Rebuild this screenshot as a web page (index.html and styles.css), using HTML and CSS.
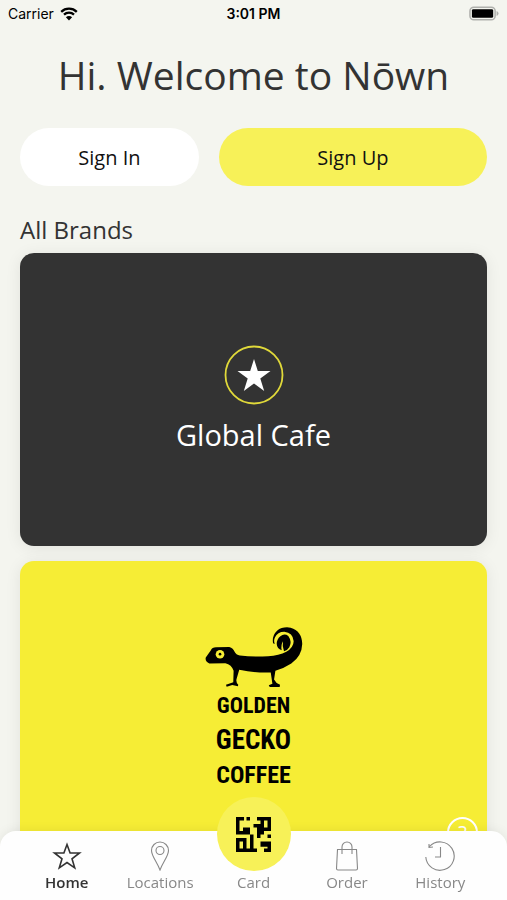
FILE: index.html
```
<!DOCTYPE html>
<html lang="en">
<head>
    <meta charset="UTF-8">
    <meta name="viewport" content="width=device-width, initial-scale=1.0">
    <title>Nōwn</title>
    <link rel="stylesheet" href="styles.css">
</head>
<body>
    <div class="status-bar">
        <div class="carrier">
            <span>Carrier</span>
            <svg class="wifi" viewBox="0 0 18 14" aria-hidden="true">
                <path d="M1.2 4.8a11.2 11.2 0 0 1 15.6 0M4 7.7a7.2 7.2 0 0 1 10 0" fill="none" stroke="#000" stroke-width="2.3"/>
                <path d="M5.9 10.3a4.4 4.4 0 0 1 6.2 0L9 13.5z"/>
            </svg>
        </div>
        <div class="time">3:01 PM</div>
        <div class="power">
            <svg class="battery" viewBox="0 0 31 15" aria-hidden="true">
                <rect x="1" y="1" width="26" height="13" rx="4" fill="none" stroke="#b0b1ad" stroke-width="1.6"/>
                <rect x="3" y="3" width="22" height="9" rx="1.5"/>
                <path d="M28.5 5q2 .8 2 2.5t-2 2.5z" fill="#b0b1ad"/>
            </svg>
        </div>
    </div>

    <main class="content">
        <h1>Hi. Welcome to Nōwn</h1>
        <div class="actions">
            <button class="btn sign-in" type="button">Sign In</button>
            <button class="btn sign-up" type="button">Sign Up</button>
        </div>

        <h2>All Brands</h2>
        <div class="brands">
            <a class="brand global-cafe" href="#">
                <svg class="badge" viewBox="0 0 60 60" aria-hidden="true">
                    <circle cx="30" cy="30" r="28.5" fill="none" stroke="#e0d93a" stroke-width="1.8"/>
                    <path d="M30 14l3.8 12h12.700L36.300 33.600l3.900 12.400L30 38.400 19.800 46l3.900-12.400L13.500 26h12.700z" fill="#fff"/>
                </svg>
                <span class="brand-name">Global Cafe</span>
            </a>
            <a class="brand golden-gecko" href="#">
                <svg class="gecko" viewBox="45 50 295 184" aria-hidden="true">
                    <path d="M47 142L62 121Q66 111 78 111L118 110Q130 113 134 125Q138 134 150 136Q190 141 235 138Q268 137 290 125Q313 110 312 92Q310 67 284 64Q263 64 256 81Q251 90 255 101L250 99Q246 76 262 61Q279 48 303 52Q337 62 338 101Q337 137 305 160Q282 175 257 182L253 208Q258 219 271 224L270 231L240 231L237 226L248 221L243 187Q195 189 148 179L141 203Q136 215 145 224L144 229L127 225L110 230L108 224L130 217L131 182Q125 163 106 159L58 160Q44 154 47 142Z"/>
                    <path d="M272 78Q284 68 296 77Q308 94 299 111Q293 121 283 123Q277 108 280 93Q273 104 276 120Q262 115 261 101Q261 87 272 78Z"/>
                    <circle cx="90" cy="132" r="13" fill="#f6ed35"/>
                    <circle cx="90" cy="132" r="4"/>
                </svg>
                <span class="gecko-name">
                    <span class="small">GOLDEN</span>
                    <span class="large">GECKO</span>
                    <span>COFFEE</span>
                </span>
            </a>
            <button class="help" type="button" aria-label="Help">?</button>
        </div>
    </main>

    <nav class="tab-bar">
        <a class="tab active" href="#">
            <svg class="icon" viewBox="0 0 30 30" aria-hidden="true">
                <path d="M15 3.500l3.100 8.500h9.400l-7.500 5.800 2.700 9L15 21.500l-7.700 5.300 2.700-9L2.500 12h9.400z" stroke-width="1.6"/>
            </svg>
            <span>Home</span>
        </a>
        <a class="tab" href="#">
            <svg class="icon" viewBox="0 0 30 30" aria-hidden="true">
                <path d="M15 29C12 21 6.500 15 6.500 9.500a8.500 8.500 0 0 1 17 0C23.500 15 18 21 15 29z"/>
                <circle cx="15" cy="9.500" r="4"/>
            </svg>
            <span>Locations</span>
        </a>
        <a class="tab" href="#">
            <span class="card-circle">
                <svg class="code" viewBox="0 0 10 10" aria-hidden="true">
                    <path d="M0 0h2.300v1H1v3h1V3h2v2H0zM3 0h1v1H3zM6 0h4v4H8v1H7V4H6V3H5V2h2V1H6zM8 1v2h1V1zM9 5h1v1H9zM6 4h1v1H6zM4 5h1v4h1v1H0V6h3v3h1zM1 7v2h1V7zM6 5h1v1H6zM7 7h3v3H8V9h1V8.500H7z" fill-rule="evenodd"/>
                </svg>
            </span>
            <span>Card</span>
        </a>
        <a class="tab" href="#">
            <svg class="icon" viewBox="0 0 30 30" aria-hidden="true">
                <path d="M5.500 8.500h19l1 19q0 1.500-1.500 1.500H6q-1.500 0-1.500-1.500zM10 13V6a5 5 0 0 1 10 0v7"/>
            </svg>
            <span>Order</span>
        </a>
        <a class="tab" href="#">
            <svg class="icon" viewBox="0 0 30 30" aria-hidden="true">
                <path d="M.8 16A14.200 14.200 0 1 0 4.500 5.500M4 3v3.500l4-.5M15.500 6v10H10"/>
            </svg>
            <span>History</span>
        </a>
    </nav>
</body>
</html>
```
FILE: styles.css
```
* {
    box-sizing: border-box;
}
body {
    margin: 0;
    min-height: 100vh;
    background-color: #f4f5ef;
    color: #333;
    font-family: "Open Sans", "Noto Sans", sans-serif;
}
a {
    color: inherit;
    text-decoration: none;
}
button {
    font-family: inherit;
    cursor: pointer;
}

.status-bar {
    display: flex;
    align-items: center;
    height: 27px;
    padding: 0 8px;
    color: #000;
    font-family: Inter, "Liberation Sans", sans-serif;
    font-size: 14px;
}
.carrier,
.power {
    flex: 1;
    display: flex;
    align-items: center;
    gap: 6px;
}
.power {
    justify-content: flex-end;
}
.time {
    font-weight: 600;
}
.wifi {
    width: 18px;
    height: 14px;
}
.battery {
    width: 30px;
    height: 15px;
}

.content {
    padding: 20px 20px 46px;
}
h1 {
    margin: 0 0 25px;
    font-size: 39px;
    font-weight: 400;
    line-height: 56px;
    text-align: center;
    white-space: nowrap;
}
.actions {
    display: flex;
    gap: 20px;
    margin-bottom: 26px;
}
.btn {
    height: 58px;
    padding: 0;
    border: none;
    border-radius: 29px;
    color: #111;
    font-size: 20px;
}
.sign-in {
    flex: 2;
    background-color: #fff;
}
.sign-up {
    flex: 3;
    background-color: #f7f158;
}
h2 {
    margin: 0 0 5px;
    font-size: 24px;
    font-weight: 400;
    line-height: 36px;
}

.brands {
    position: relative;
    display: flex;
    flex-direction: column;
    gap: 15px;
}
.brand {
    display: flex;
    flex-direction: column;
    align-items: center;
    justify-content: center;
    height: 293px;
    border-radius: 14px;
    box-shadow: 0 2px 16px rgba(0, 0, 0, 0.08);
}
.global-cafe {
    gap: 10px;
    background-color: #333;
    color: #fff;
}
.badge {
    width: 60px;
    height: 60px;
}
.brand-name {
    font-size: 29px;
    line-height: 40px;
}
.golden-gecko {
    padding-top: 4px;
    background-color: #f6ed35;
    color: #000;
}
.gecko {
    width: 98px;
    height: 61px;
}
.gecko-name {
    display: flex;
    flex-direction: column;
    align-items: center;
    font-family: "Roboto Condensed", "Liberation Sans Narrow", Roboto, sans-serif;
    font-size: 24px;
    font-weight: 700;
    line-height: 35px;
}
.gecko-name .small {
    font-size: 22px;
}
.gecko-name .large {
    font-size: 27px;
}
.help {
    position: absolute;
    right: 9px;
    bottom: 6px;
    width: 31px;
    height: 31px;
    padding: 0;
    border: 2px solid #fff;
    border-radius: 50%;
    background: none;
    color: #fff;
    font-size: 20px;
    line-height: 26px;
}

.tab-bar {
    position: fixed;
    right: 0;
    bottom: 0;
    left: 0;
    display: flex;
    height: 69px;
    padding: 10px 20px 0;
    border-radius: 16px 16px 0 0;
    background-color: #fefefe;
    box-shadow: 0 0 12px rgba(0, 0, 0, 0.08);
}
.tab {
    flex: 1;
    display: flex;
    flex-direction: column;
    align-items: center;
    color: #888;
    font-size: 15px;
    line-height: 22px;
}
.tab.active {
    color: #333;
    font-weight: 600;
}
.icon {
    width: 30px;
    height: 30px;
    fill: none;
    stroke: currentColor;
    stroke-width: 1.1;
}
.card-circle {
    display: flex;
    align-items: center;
    justify-content: center;
    width: 74px;
    height: 74px;
    margin-top: -44px;
    border-radius: 50%;
    background-color: #f7f158;
}
.code {
    width: 35px;
    height: 35px;
}
```
